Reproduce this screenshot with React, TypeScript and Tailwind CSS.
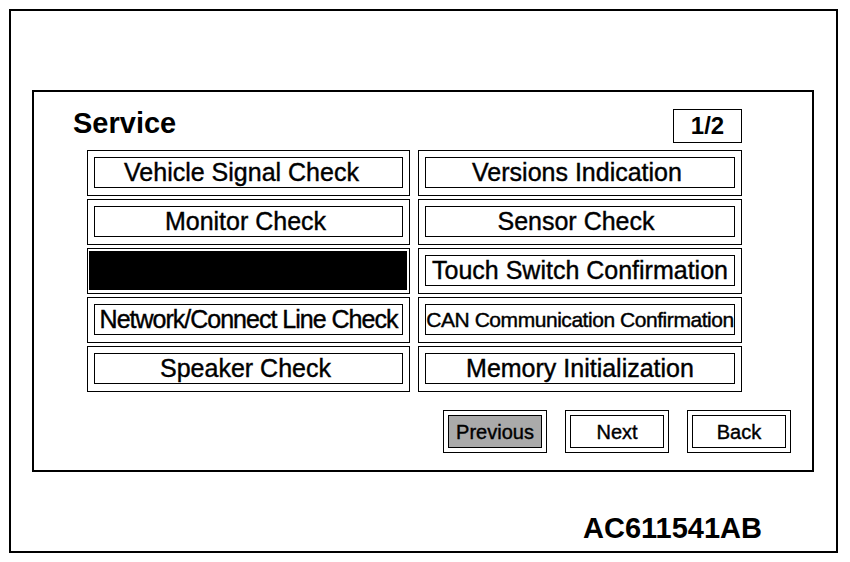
import React from "react";

type Item = { label: string; black?: boolean; tight?: boolean; small?: boolean; shift?: string };

const left: Item[] = [
  { label: "Vehicle Signal Check", shift: "pr-[14px]" },
  { label: "Monitor Check", shift: "pr-[6px]" },
  { label: "", black: true },
  { label: "Network/Connect Line Check", tight: true },
  { label: "Speaker Check", shift: "pr-[6px]" },
];
const right: Item[] = [
  { label: "Versions Indication", shift: "pr-[6px]" },
  { label: "Sensor Check", shift: "pr-[8px]" },
  { label: "Touch Switch Confirmation" },
  { label: "CAN Communication Confirmation", small: true },
  { label: "Memory Initialization" },
];

function Cell({ item }: { item: Item }) {
  if (item.black) {
    return (
      <div className="h-[46px] border border-black pl-[1px] pt-[2px] pr-[2px] pb-[3px]">
        <div className="h-full w-full bg-black" />
      </div>
    );
  }
  return (
    <div className="h-[46px] border border-black pl-[6px] pr-[6px] pt-[6px] pb-[7px]">
      <div
        className={
          "flex h-full w-full items-center justify-center whitespace-nowrap border border-black text-black [-webkit-text-stroke:0.4px_black] " +
          (item.small
            ? "text-[21px] tracking-[-0.45px]"
            : item.tight
            ? "text-[25px] tracking-[-1px]"
            : "text-[25px]") +
          " " +
          (item.shift ?? "")
        }
      >
        {item.label}
      </div>
    </div>
  );
}

function NavButton({ label, gray }: { label: string; gray?: boolean }) {
  return (
    <div className="h-[43px] w-[104px] border border-black p-[4px]">
      <div
        className={
          "flex h-full w-full items-center justify-center border border-black text-[20px] [-webkit-text-stroke:0.4px_black] " +
          (gray ? "bg-[#aaaaaa]" : "bg-white")
        }
      >
        {label}
      </div>
    </div>
  );
}

export default function App() {
  const rows = left.map((l, i) => [l, right[i]]);
  return (
    <div
      className="h-[562px] w-[850px] bg-white pl-[9px] pt-[9px] text-black"
      style={{ fontFamily: '"Liberation Sans", Arial, sans-serif' }}
    >
      <div className="flex h-[544px] w-[829px] flex-col border-2 border-black pl-[21px] pt-[79px]">
        <div className="flex h-[382px] w-[782px] flex-col border-2 border-black">
          <div className="mt-[17px] flex h-[34px] items-start justify-between pl-[39px] pr-[70px]">
            <div className="text-[29px] font-bold leading-[28px]">Service</div>
            <div className="flex h-[34px] w-[69px] items-center justify-center border border-black text-[24px] font-bold leading-none">
              1/2
            </div>
          </div>
          <div className="ml-[53px] mt-[7px] grid w-[655px] grid-cols-[323px_324px] gap-x-[8px] gap-y-[3px]">
            {rows.map(([l, r], i) => (
              <React.Fragment key={i}>
                <Cell item={l} />
                <Cell item={r} />
              </React.Fragment>
            ))}
          </div>
          <div className="mt-[18px] flex justify-end gap-[18px] pr-[21px]">
            <NavButton label="Previous" gray />
            <NavButton label="Next" />
            <NavButton label="Back" />
          </div>
        </div>
        <div className="mt-[42px] flex justify-end pr-[74px]">
          <div className="text-[29px] font-bold leading-[28px]">AC611541AB</div>
        </div>
      </div>
    </div>
  );
}
